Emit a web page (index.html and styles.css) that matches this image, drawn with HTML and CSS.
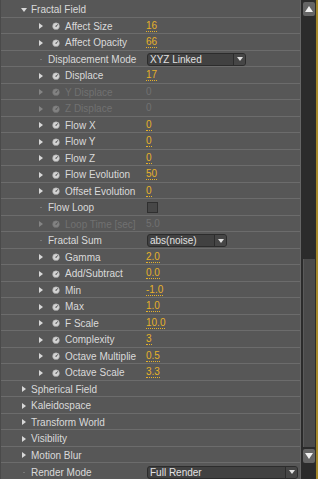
FILE: index.html
```html
<!DOCTYPE html>
<html>
<head>
<meta charset="utf-8">
<link rel="stylesheet" href="styles.css">
</head>
<body>
<svg width="0" height="0" style="position:absolute">
  <defs>
    <symbol id="tr" viewBox="0 0 4 6"><polygon points="0,0 4,3 0,6" fill="#d8d8d8"/></symbol>
    <symbol id="td" viewBox="0 0 6 4"><polygon points="0,0 6,0 3,4" fill="#d8d8d8"/></symbol>
    <symbol id="sw" viewBox="0 0 8 8"><circle cx="4" cy="4.2" r="3.4" fill="#d4d4d4" stroke="#9a9a9a" stroke-width="0.5"/><path d="M4 4.2 L6 2.4" stroke="#555" stroke-width="1"/><circle cx="4" cy="4.2" r="0.7" fill="#666"/></symbol>
    <symbol id="dd" viewBox="0 0 6 4"><polygon points="0,0 6,0 3,4" fill="#e0e0e0"/></symbol>
  </defs>
</svg>
<div class="panel">
  <div class="list">
    <div class="row"><span class="name l0"><svg class="tdn"><use href="#td"/></svg><span>Fractal Field</span></span></div>

    <div class="row"><span class="name p"><svg class="tri"><use href="#tr"/></svg><svg class="sw"><use href="#sw"/></svg><span>Affect Size</span></span><span class="val">16</span></div>
    <div class="row"><span class="name p"><svg class="tri"><use href="#tr"/></svg><svg class="sw"><use href="#sw"/></svg><span>Affect Opacity</span></span><span class="val">66</span></div>
    <div class="row"><span class="name q"><span class="dot"></span><span>Displacement Mode</span></span><span class="drop w1"><span class="dtxt">XYZ Linked</span><span class="darr"><svg><use href="#dd"/></svg></span></span></div>
    <div class="row"><span class="name p"><svg class="tri"><use href="#tr"/></svg><svg class="sw"><use href="#sw"/></svg><span>Displace</span></span><span class="val">17</span></div>
    <div class="row dis"><span class="name p"><svg class="tri"><use href="#tr"/></svg><svg class="sw"><use href="#sw"/></svg><span>Y Displace</span></span><span class="val">0</span></div>
    <div class="row dis"><span class="name p"><svg class="tri"><use href="#tr"/></svg><svg class="sw"><use href="#sw"/></svg><span>Z Displace</span></span><span class="val">0</span></div>
    <div class="row"><span class="name p"><svg class="tri"><use href="#tr"/></svg><svg class="sw"><use href="#sw"/></svg><span>Flow X</span></span><span class="val">0</span></div>
    <div class="row"><span class="name p"><svg class="tri"><use href="#tr"/></svg><svg class="sw"><use href="#sw"/></svg><span>Flow Y</span></span><span class="val">0</span></div>
    <div class="row"><span class="name p"><svg class="tri"><use href="#tr"/></svg><svg class="sw"><use href="#sw"/></svg><span>Flow Z</span></span><span class="val">0</span></div>
    <div class="row"><span class="name p"><svg class="tri"><use href="#tr"/></svg><svg class="sw"><use href="#sw"/></svg><span>Flow Evolution</span></span><span class="val">50</span></div>
    <div class="row"><span class="name p"><svg class="tri"><use href="#tr"/></svg><svg class="sw"><use href="#sw"/></svg><span>Offset Evolution</span></span><span class="val">0</span></div>
    <div class="row"><span class="name q"><span class="dot"></span><span>Flow Loop</span></span><span class="chk"></span></div>
    <div class="row dis"><span class="name p"><svg class="tri"><use href="#tr"/></svg><svg class="sw"><use href="#sw"/></svg><span>Loop Time [sec]</span></span><span class="val">5.0</span></div>
    <div class="row"><span class="name q"><span class="dot"></span><span>Fractal Sum</span></span><span class="drop w2"><span class="dtxt">abs(noise)</span><span class="darr"><svg><use href="#dd"/></svg></span></span></div>
    <div class="row"><span class="name p"><svg class="tri"><use href="#tr"/></svg><svg class="sw"><use href="#sw"/></svg><span>Gamma</span></span><span class="val">2.0</span></div>
    <div class="row"><span class="name p"><svg class="tri"><use href="#tr"/></svg><svg class="sw"><use href="#sw"/></svg><span>Add/Subtract</span></span><span class="val">0.0</span></div>
    <div class="row"><span class="name p"><svg class="tri"><use href="#tr"/></svg><svg class="sw"><use href="#sw"/></svg><span>Min</span></span><span class="val">-1.0</span></div>
    <div class="row"><span class="name p"><svg class="tri"><use href="#tr"/></svg><svg class="sw"><use href="#sw"/></svg><span>Max</span></span><span class="val">1.0</span></div>
    <div class="row"><span class="name p"><svg class="tri"><use href="#tr"/></svg><svg class="sw"><use href="#sw"/></svg><span>F Scale</span></span><span class="val">10.0</span></div>
    <div class="row"><span class="name p"><svg class="tri"><use href="#tr"/></svg><svg class="sw"><use href="#sw"/></svg><span>Complexity</span></span><span class="val">3</span></div>
    <div class="row"><span class="name p"><svg class="tri"><use href="#tr"/></svg><svg class="sw"><use href="#sw"/></svg><span>Octave Multiplie</span></span><span class="val">0.5</span></div>
    <div class="row"><span class="name p"><svg class="tri"><use href="#tr"/></svg><svg class="sw"><use href="#sw"/></svg><span>Octave Scale</span></span><span class="val">3.3</span></div>

    <div class="row"><span class="name l0c"><svg class="tri"><use href="#tr"/></svg><span>Spherical Field</span></span></div>
    <div class="row"><span class="name l0c"><svg class="tri"><use href="#tr"/></svg><span>Kaleidospace</span></span></div>
    <div class="row"><span class="name l0c"><svg class="tri"><use href="#tr"/></svg><span>Transform World</span></span></div>
    <div class="row"><span class="name l0c"><svg class="tri"><use href="#tr"/></svg><span>Visibility</span></span></div>
    <div class="row"><span class="name l0c"><svg class="tri"><use href="#tr"/></svg><span>Motion Blur</span></span></div>
    <div class="row last"><span class="name l0q"><span class="dot"></span><span>Render Mode</span></span><span class="drop w3"><span class="dtxt">Full Render</span><span class="darr"><svg><use href="#dd"/></svg></span></span></div>
  </div>
  <div class="scroll">
    <div class="sbtn"><svg viewBox="0 0 8 6"><polygon points="0,6 8,6 4,0" fill="#f0f0f0"/></svg></div>
    <div class="track"><div class="thumb"></div></div>
    <div class="sbtn"><svg viewBox="0 0 8 6"><polygon points="0,0 8,0 4,6" fill="#f0f0f0"/></svg></div>
    <div class="tail"></div>
  </div>
</div>
</body>
</html>
```
FILE: styles.css
```css
* { box-sizing: border-box; }
html, body { margin: 0; padding: 0; background: #575757; }
body {
  font-family: "Liberation Sans", Arial, sans-serif;
  font-size: 10px;
  color: #dadada;
  overflow: hidden;
}
.panel {
  display: flex;
  width: 318px;
  height: 479px;
}
.list {
  width: 301px;
  padding-top: 1px;
  background: #575757;
  border-left: 1px solid #4a4a4a;
  border-right: 1px solid #656565;
}
.row {
  display: grid;
  grid-template-columns: 145px 1fr;
  align-items: center;
  height: 16.5px;
  padding-top: 2px;
  border-bottom: 1px solid #6c6c6c;
  white-space: nowrap;
}
.row.last { border-bottom: none; }
.name { display: flex; align-items: center; }
.name.l0 { padding-left: 20px; }
.name.l0c { padding-left: 21px; }
.name.p { padding-left: 38px; }
.name.q { padding-left: 39px; }
.name.l0q { padding-left: 22px; }
.tdn { width: 6px; height: 4px; margin-right: 4px; }
.tri { width: 4px; height: 6px; margin-right: 5px; }
.name.p .tri { margin-right: 9px; }
.sw { width: 8px; height: 8px; margin-right: 5px; }
.dot { width: 2px; height: 1px; background: #777; margin-right: 6px; }
.val {
  justify-self: start;
  color: #e6b12a;
  line-height: 10px;
  border-bottom: 1px dotted #e6b12a;
}
.dis .name, .dis .val { color: #717171; border-color: transparent; }
.dis svg { opacity: 0.35; }
.chk {
  width: 11px;
  height: 11px;
  margin-left: 1px;
  background: #474747;
  border: 1px solid #2f2f2f;
}
.drop {
  display: flex;
  height: 13px;
  margin-left: 1px;
  background: #414141;
  border: 1px solid #2c2c2c;
  border-radius: 3px;
  color: #e2e2e2;
  line-height: 11px;
}
.w1 { width: 99px; }
.w2 { width: 80px; }
.w3 { width: 151px; }
.dtxt { flex: 1; padding-left: 2px; overflow: hidden; }
.darr {
  width: 12px;
  display: flex;
  align-items: center;
  justify-content: center;
  border-left: 1px solid #2c2c2c;
  background: #464646;
  border-radius: 0 2px 2px 0;
}
.darr svg { width: 6px; height: 4px; }
.scroll {
  width: 17px;
  display: flex;
  flex-direction: column;
  align-items: flex-start;
  padding: 2px 0 0 1px;
  background: #2b2b2b;
  border-right: 2px solid #a68a2c;
}
.sbtn {
  width: 12px;
  height: 14px;
  margin-left: 1px;
  background: #656565;
  border-radius: 2px;
  display: flex;
  align-items: center;
  justify-content: center;
}
.sbtn svg { width: 8px; height: 6px; }
.track {
  flex: 1;
  width: 13px;
  display: flex;
  flex-direction: column;
  justify-content: flex-end;
  padding-bottom: 2px;
}
.thumb {
  height: 188px;
  margin-left: 1px;
  width: 12px;
  background: #4a4a4a;
  border-left: 1px solid #5a5a5a;
}
.tail { height: 16px; }
```
